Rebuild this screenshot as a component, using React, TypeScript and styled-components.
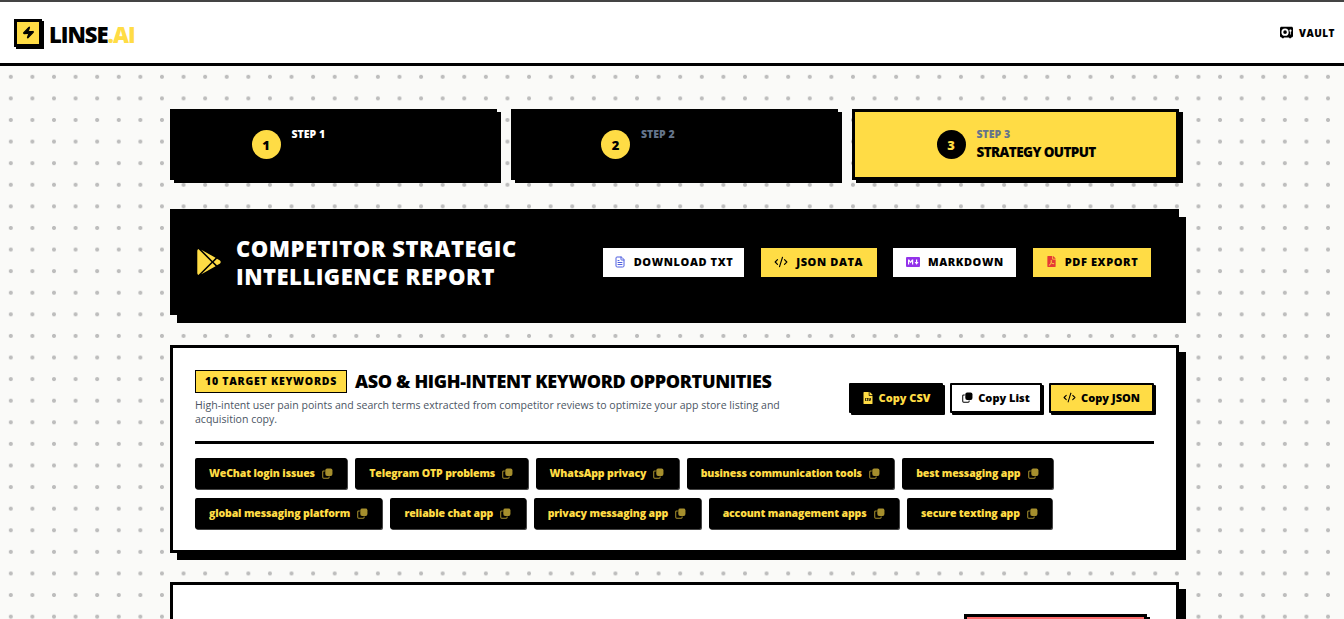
import React from "react";
import styled, { createGlobalStyle } from "styled-components";
import { FaGooglePlay, FaFilePdf, FaFileCsv } from "react-icons/fa";
import { FaVault } from "react-icons/fa6";
import { CodeXml, FileText, Zap } from "lucide-react";

const Global = createGlobalStyle`
  html, body { margin: 0; padding: 0; overflow: hidden; background: #fafaf8; }
  * { box-sizing: border-box; }
  body { font-family: "Open Sans", "Noto Sans", "Liberation Sans", sans-serif; color: #000; }
`;

const Page = styled.div`
  height: 619px;
  overflow: hidden;
  display: flex;
  flex-direction: column;
  border-top: 2px solid #444;
`;

const Nav = styled.header`
  height: 64px;
  flex: none;
  background: #fff;
  border-bottom: 3px solid #000;
  display: flex;
  align-items: center;
  justify-content: space-between;
  padding: 0 9px 0 14px;
`;

const Brand = styled.div`
  display: flex;
  align-items: center;
  gap: 7px;
`;

const LogoBox = styled.div`
  width: 28px;
  height: 28px;
  background: #ffdc45;
  border: 3px solid #000;
  box-shadow: 2px 2px 0 #000;
  display: flex;
  align-items: center;
  justify-content: center;
`;

const LogoText = styled.div`
  font-size: 22px;
  font-weight: 800;
  letter-spacing: -1px;
  line-height: 1;
  padding-top: 3px;
  span { color: #ffdc45; }
`;

const Vault = styled.div`
  display: flex;
  align-items: center;
  gap: 6px;
  font-size: 10px;
  font-weight: 800;
  letter-spacing: 0.5px;
`;

const Main = styled.main`
  flex: 1;
  padding: 43px 0 0 170px;
  background-color: #fafaf8;
  background-image: radial-gradient(circle, #bdbdbd 1.9px, transparent 2.2px);
  background-size: 21.6px 21.6px;
  background-position: 0 0;
`;

const Column = styled.div`
  width: 1009px;
  display: flex;
  flex-direction: column;
`;

const Steps = styled.div`
  display: grid;
  grid-template-columns: repeat(3, 1fr);
  gap: 14px;
  margin-bottom: 29px;
`;

const Step = styled.div<{ $active?: boolean }>`
  height: 71px;
  background: ${(p) => (p.$active ? "#ffdc45" : "#000")};
  border: 3px solid #000;
  box-shadow: 4px 3px 0 #000;
  display: flex;
  align-items: center;
  justify-content: center;
  gap: 11px;
`;

const StepCircle = styled.div<{ $active?: boolean }>`
  width: 29px;
  height: 29px;
  flex: none;
  border-radius: 50%;
  background: ${(p) => (p.$active ? "#000" : "#ffdc45")};
  color: ${(p) => (p.$active ? "#ffdc45" : "#000")};
  font-size: 13px;
  font-weight: 800;
  display: flex;
  align-items: center;
  justify-content: center;
`;

const StepText = styled.div<{ $w: number }>`
  width: ${(p) => p.$w}px;
  display: flex;
  flex-direction: column;
`;

const StepLabel = styled.div<{ $light?: boolean }>`
  font-size: 10.5px;
  font-weight: 800;
  line-height: 14px;
  color: ${(p) => (p.$light ? "#fff" : "#64748b")};
`;

const StepTitle = styled.div`
  font-size: 13.5px;
  font-weight: 800;
  line-height: 20px;
  margin-top: 1px;
  letter-spacing: -0.6px;
  white-space: nowrap;
  color: #000;
`;

const Banner = styled.section`
  height: 106px;
  background: #000;
  box-shadow: 7px 8px 0 #000;
  margin-bottom: 31px;
  display: flex;
  align-items: center;
  justify-content: space-between;
  padding: 0 28px 0 26px;
`;

const BannerTitleWrap = styled.div`
  display: flex;
  align-items: center;
  gap: 14px;
  color: #ffdc45;
  font-size: 26px;
`;

const BannerTitle = styled.h1`
  margin: 0;
  color: #fff;
  font-size: 22px;
  line-height: 28px;
  font-weight: 800;
  letter-spacing: 0.5px;
  width: 300px;
`;

const Exports = styled.div`
  display: flex;
  gap: 16.67px;
`;

const ExportBtn = styled.div<{ $yellow?: boolean; $w: number }>`
  height: 29px;
  width: ${(p) => p.$w}px;
  background: ${(p) => (p.$yellow ? "#ffdc45" : "#fff")};
  display: flex;
  align-items: center;
  justify-content: center;
  gap: 8px;
  padding-bottom: 1px;
  font-size: 11px;
  font-weight: 800;
  letter-spacing: 0.6px;
  white-space: nowrap;
`;

const Card = styled.section`
  background: #fff;
  border: 3px solid #000;
  box-shadow: 7px 7px 0 #000;
  padding: 21px 22px 0;
`;

const KeywordCard = styled(Card)`
  height: 208px;
  margin-bottom: 29px;
  margin-top: -1px;
`;

const NextCard = styled(Card)`
  height: 300px;
  display: flex;
  justify-content: flex-end;
  padding: 29px 29px 0 0;
`;

const RedBtn = styled.div`
  width: 183px;
  height: 60px;
  background: #ff6b6b;
  border: 3px solid #000;
  box-shadow: 3px 3px 0 #000;
`;

const CardHead = styled.div`
  display: flex;
  justify-content: space-between;
  align-items: center;
  padding-bottom: 15px;
  border-bottom: 3px solid #000;
  margin-bottom: 14px;
`;

const HeadLeft = styled.div`
  width: 600px;
`;

const HeadRow = styled.div`
  display: flex;
  align-items: center;
  gap: 8px;
  margin-bottom: 5px;
`;

const Badge = styled.div`
  width: 152px;
  height: 23px;
  background: #ffdc45;
  border: 1px solid #000;
  display: flex;
  align-items: center;
  justify-content: center;
  font-size: 10.5px;
  font-weight: 800;
  letter-spacing: 0.75px;
  white-space: nowrap;
`;

const CardTitle = styled.h2`
  margin: 0;
  font-size: 18px;
  line-height: 24px;
  font-weight: 800;
  letter-spacing: -0.35px;
  white-space: nowrap;
`;

const CardSub = styled.p`
  margin: 0;
  font-size: 10.55px;
  line-height: 14px;
  color: #4b5563;
`;

const CopyBtns = styled.div`
  display: flex;
  gap: 7px;
  margin-top: 1px;
`;

const CopyBtn = styled.div<{ $bg: string; $fg: string; $w: number }>`
  width: ${(p) => p.$w}px;
  height: 30px;
  background: ${(p) => p.$bg};
  color: ${(p) => p.$fg};
  border: 2px solid #000;
  box-shadow: 2px 2px 0 #000;
  border-radius: 1px;
  display: flex;
  align-items: center;
  justify-content: center;
  gap: 5px;
  padding-bottom: 1px;
  font-size: 11px;
  font-weight: 800;
  white-space: nowrap;
`;

const Tags = styled.div`
  display: flex;
  flex-wrap: wrap;
  gap: 8px;
`;

const Tag = styled.div`
  height: 31px;
  margin-bottom: 1px;
  background: #000;
  color: #ffdc45;
  border-radius: 2px;
  box-shadow: 1px 1px 0 #444;
  padding: 0 14.4px 1px 14px;
  display: flex;
  align-items: center;
  gap: 7px;
  font-size: 10.55px;
  font-weight: 800;
  letter-spacing: -0.15px;
  white-space: nowrap;
  svg { opacity: 0.65; flex: none; }
`;

const CopyIcon = ({ size = 11 }: { size?: number }) => (
  <svg width={size} height={size} viewBox="0 0 12 12" fill="none">
    <path d="M3 3.2H1.8a1 1 0 0 0-1 1v6a1 1 0 0 0 1 1h5a1 1 0 0 0 1-1V9.4" stroke="currentColor" strokeWidth="1.1" />
    <rect x="3.6" y="0.6" width="7.8" height="8" rx="2" fill="currentColor" />
  </svg>
);

const MdIcon = () => (
  <svg width="14" height="10" viewBox="0 0 14 10">
    <rect width="14" height="10" rx="1" fill="#9333ea" />
    <path d="M2 7.5V2.5h1.2L4.6 4.4 6 2.5h1.2v5H6V4.4L4.6 6.2 3.2 4.4v3.1zM10 2.5h1.2V5H12.6L10.6 7.7 8.6 5H10z" fill="#fff" />
  </svg>
);

const keywords: string[] = [
  "WeChat login issues",
  "Telegram OTP problems",
  "WhatsApp privacy",
  "business communication tools",
  "best messaging app",
  "global messaging platform",
  "reliable chat app",
  "privacy messaging app",
  "account management apps",
  "secure texting app",
];

export default function App() {
  return (
    <Page>
      <Global />
      <Nav>
        <Brand>
          <LogoBox><Zap size={13} fill="#000" color="#000" /></LogoBox>
          <LogoText>LINSE<span>.AI</span></LogoText>
        </Brand>
        <Vault><FaVault size={13} />VAULT</Vault>
      </Nav>
      <Main>
        <Column>
          <Steps>
            <Step>
              <StepCircle>1</StepCircle>
              <StepText $w={124}>
                <StepLabel $light>STEP 1</StepLabel>
                <StepTitle>APP SELECTION</StepTitle>
              </StepText>
            </Step>
            <Step>
              <StepCircle>2</StepCircle>
              <StepText $w={107}>
                <StepLabel>STEP 2</StepLabel>
                <StepTitle>ANALYSIS</StepTitle>
              </StepText>
            </Step>
            <Step $active>
              <StepCircle $active>3</StepCircle>
              <StepText $w={118}>
                <StepLabel>STEP 3</StepLabel>
                <StepTitle>STRATEGY OUTPUT</StepTitle>
              </StepText>
            </Step>
          </Steps>

          <Banner>
            <BannerTitleWrap>
              <FaGooglePlay />
              <BannerTitle>COMPETITOR STRATEGIC INTELLIGENCE REPORT</BannerTitle>
            </BannerTitleWrap>
            <Exports>
              <ExportBtn $w={141}><FileText size={12} color="#4f5fe0" />DOWNLOAD TXT</ExportBtn>
              <ExportBtn $w={116} $yellow><CodeXml size={14} />JSON DATA</ExportBtn>
              <ExportBtn $w={123}><MdIcon />MARKDOWN</ExportBtn>
              <ExportBtn $w={118} $yellow><FaFilePdf size={11} color="#e53935" />PDF EXPORT</ExportBtn>
            </Exports>
          </Banner>

          <KeywordCard>
            <CardHead>
              <HeadLeft>
                <HeadRow>
                  <Badge>10 TARGET KEYWORDS</Badge>
                  <CardTitle>ASO &amp; HIGH-INTENT KEYWORD OPPORTUNITIES</CardTitle>
                </HeadRow>
                <CardSub>
                  High-intent user pain points and search terms extracted from competitor reviews to optimize your app store listing and acquisition copy.
                </CardSub>
              </HeadLeft>
              <CopyBtns>
                <CopyBtn $bg="#000" $fg="#ffdc45" $w={94}><FaFileCsv size={12} />Copy CSV</CopyBtn>
                <CopyBtn $bg="#fff" $fg="#000" $w={92}><CopyIcon />Copy List</CopyBtn>
                <CopyBtn $bg="#ffdc45" $fg="#000" $w={105}><CodeXml size={13} />Copy JSON</CopyBtn>
              </CopyBtns>
            </CardHead>
            <Tags>
              {keywords.map((t) => (
                <Tag key={t}>{t}<CopyIcon /></Tag>
              ))}
            </Tags>
          </KeywordCard>

          <NextCard>
            <RedBtn />
          </NextCard>
        </Column>
      </Main>
    </Page>
  );
}
